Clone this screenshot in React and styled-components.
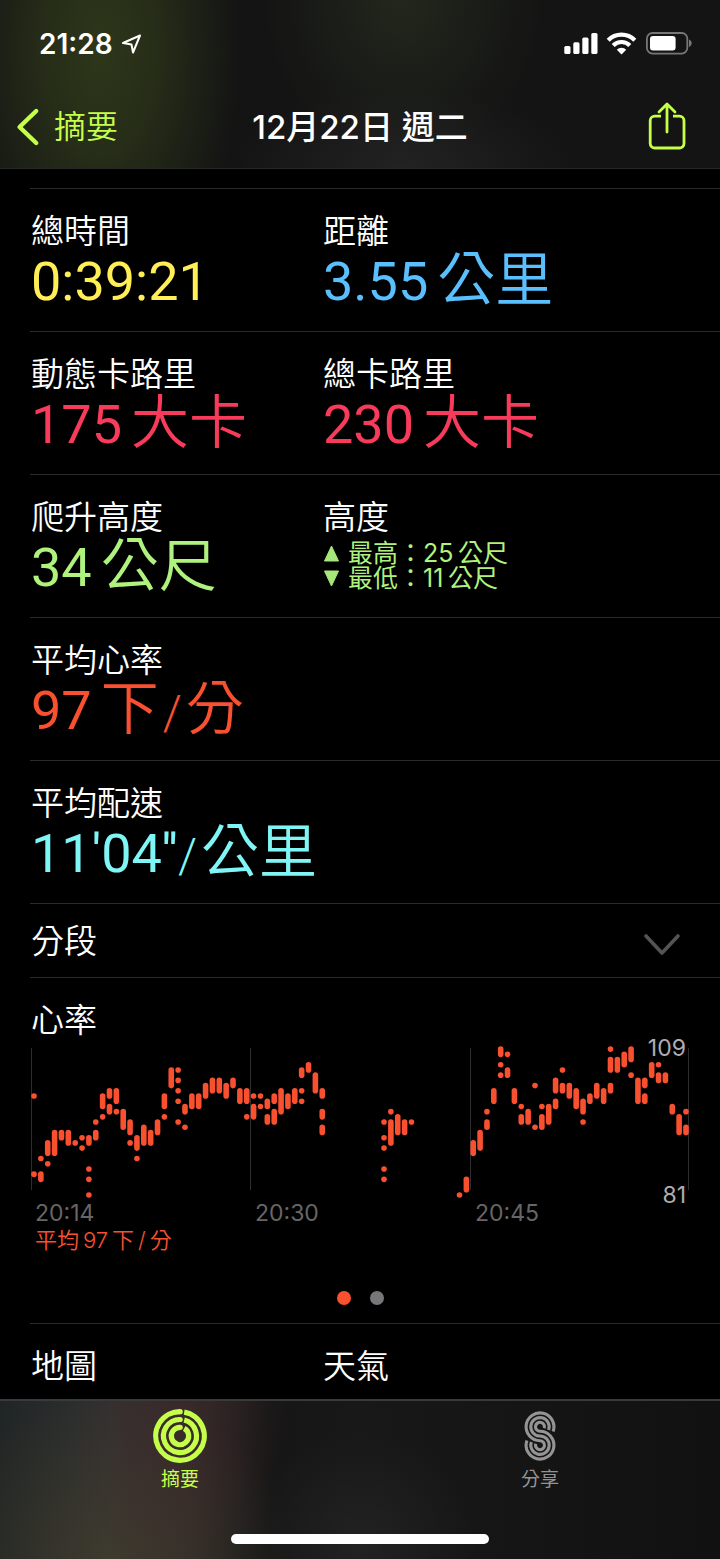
import React from 'react';
import styled, { createGlobalStyle } from 'styled-components';

const GlobalStyle = createGlobalStyle`
  * {
    box-sizing: border-box;
  }

  body {
    margin: 0;
    background: #000;
    color: #fff;
    font-family: Inter, "Noto Sans CJK TC", sans-serif;
  }

  button {
    margin: 0;
    padding: 0;
    border: 0;
    background: none;
    color: inherit;
    font: inherit;
    cursor: pointer;
  }
`;

const colors = {
  lime: '#c6ff4a',
  yellow: '#ffee55',
  blue: '#59bffd',
  pink: '#f93b5b',
  green: '#b0f27e',
  red: '#f95030',
  cyan: '#7ff6f5',
  line: '#2a2a2b',
};

const Page = styled.div`
  display: flex;
  flex-direction: column;
  min-height: 100vh;
`;

const Header = styled.header`
  border-bottom: 1px solid #262626;
  background:
    radial-gradient(ellipse 140px 260px at 100px 50px, rgba(56, 70, 28, 0.7), rgba(56, 70, 28, 0.5) 40%, rgba(56, 70, 28, 0) 100%),
    radial-gradient(ellipse 140px 160px at 56% 0, rgba(44, 52, 34, 0.6), rgba(44, 52, 34, 0) 100%),
    radial-gradient(ellipse 170px 80px at 56% 100%, rgba(44, 44, 46, 0.6), rgba(44, 44, 46, 0) 100%),
    #141414;
`;

const StatusBar = styled.div`
  display: flex;
  align-items: center;
  justify-content: space-between;
  height: 86px;
  padding: 2px 28px 0 39px;
`;

const Clock = styled.div`
  display: flex;
  align-items: center;
  gap: 8px;
  font-size: 28px;
  font-weight: 600;
`;

const NavBar = styled.nav`
  display: grid;
  grid-template-columns: 1fr auto 1fr;
  align-items: center;
  height: 82px;
  padding: 0 16px;
`;

const BackButton = styled.button`
  display: flex;
  align-items: center;
  gap: 14px;
  justify-self: start;
  color: ${colors.lime};
  font-size: 32px;
  font-weight: 350;
  line-height: 40px;
`;

const Title = styled.h1`
  margin: 0;
  font-size: 33px;
  font-weight: 500;
  line-height: 40px;
`;

const ShareButton = styled.button`
  justify-self: end;
  height: 52px;
  margin-right: 18px;
  color: ${colors.lime};
`;

const Content = styled.main`
  flex: 1;
  padding: 19px 0 0 30px;
`;

const Row = styled.dl`
  display: grid;
  grid-template-columns: 292px 1fr;
  margin: 0;
  padding: 22px 0 20px 1px;
  border-top: 1px solid ${colors.line};
`;

const Metric = styled.div`
  white-space: nowrap;
`;

const Label = styled.dt`
  font-size: 33px;
  font-weight: 350;
  line-height: 40px;
`;

const Value = styled.dd`
  display: flex;
  align-items: baseline;
  height: 60px;
  margin: 0;
  color: ${props => props.color};
  font-family: Roboto, sans-serif;
  font-size: 54px;
  line-height: 62px;
`;

const Unit = styled.span`
  margin-left: 9px;
  font-family: "Noto Sans CJK TC", sans-serif;
  font-size: 58px;
  font-weight: 350;
  line-height: 44px;
`;

const Slash = styled.span`
  font-size: 48px;
  font-weight: 300;

  ${Unit} + & {
    margin-left: 4px;
  }

  & + ${Unit} {
    margin-left: 4px;
  }
`;

const Altitude = styled.dd`
  margin: 0;
  padding-top: 4px;
  color: ${colors.green};
  font-size: 25px;
  line-height: 25px;
`;

const AltitudeLine = styled.div`
  display: flex;
  align-items: center;
  gap: 8px;
  height: 25px;
`;

const SegmentButton = styled.button`
  display: flex;
  align-items: center;
  justify-content: space-between;
  width: 100%;
  height: 74px;
  padding: 0 39px 0 1px;
  border-top: 1px solid ${colors.line};
  font-size: 33px;
  font-weight: 350;
  line-height: 40px;
`;

const ChartSection = styled.section`
  padding: 22px 30px 17px 0;
  border-top: 1px solid ${colors.line};
`;

const SectionTitle = styled.h2`
  margin: 0 0 0 1px;
  font-size: 33px;
  font-weight: 350;
  line-height: 40px;
`;

const Chart = styled.svg`
  display: block;
  width: 100%;
  height: auto;
  overflow: visible;
`;

const Times = styled.div`
  display: grid;
  grid-template-columns: repeat(3, 1fr);
  color: #666668;
  font-size: 23px;
  line-height: 26px;
`;

const Time = styled.span`
  padding-left: 5px;
`;

const Average = styled.div`
  padding-left: 5px;
  color: ${colors.red};
  font-size: 22px;
  font-weight: 350;
  line-height: 28px;
`;

const Dots = styled.div`
  display: flex;
  justify-content: center;
  gap: 19px;
  margin-top: 37px;
  padding-bottom: 1px;
`;

const Dot = styled.button`
  width: 14px;
  height: 14px;
  border-radius: 50%;
  background: ${props => (props.$active ? colors.red : '#777779')};
`;

const LastRow = styled(Row)`
  padding-bottom: 12px;
`;

const TabBar = styled.footer`
  border-top: 2px solid #3a3a3a;
  background:
    radial-gradient(ellipse 110px 190px at 180px 0, rgba(72, 40, 42, 0.5), rgba(72, 40, 42, 0.3) 45%, rgba(72, 40, 42, 0) 100%),
    radial-gradient(ellipse 180px 170px at 110px 100%, rgba(72, 64, 44, 0.6), rgba(72, 64, 44, 0) 100%),
    radial-gradient(ellipse 120px 110px at 50% 90%, rgba(44, 44, 46, 0.5), rgba(44, 44, 46, 0) 100%),
    linear-gradient(90deg, #202525 0, #2f3131 110px, #2b2a29 190px, #161616 270px, #181818 50%, #111 100%);
`;

const Tabs = styled.nav`
  display: grid;
  grid-template-columns: 1fr 1fr;
`;

const Tab = styled.button`
  display: flex;
  flex-direction: column;
  align-items: center;
  gap: 2px;
  padding-top: 7px;
  color: ${props => (props.$active ? colors.lime : '#949494')};
  font-size: 19px;
  line-height: 28px;
`;

const HomeIndicator = styled.div`
  width: 258px;
  height: 10px;
  margin: 40px auto 15px;
  border-radius: 5px;
  background: #fff;
`;

// one entry per column: [column, [high, low], ...], a single reading has high === low
const heartRate = [
  [0, [100, 100], [85, 85]],
  [1, [88, 88], [85, 84]],
  [2, [91, 89], [87, 87]],
  [3, [93, 89]],
  [4, [93, 92]],
  [5, [93, 91]],
  [6, [91, 91]],
  [7, [92, 92], [90, 90]],
  [8, [92, 91], [86, 86], [84, 84], [81, 81]],
  [9, [95, 95], [93, 92]],
  [10, [100, 98], [96, 96]],
  [11, [101, 100], [98, 97]],
  [12, [101, 99], [97, 97]],
  [13, [97, 94]],
  [14, [95, 93], [91, 91]],
  [15, [92, 90], [88, 88]],
  [16, [94, 91]],
  [17, [93, 91]],
  [18, [95, 93]],
  [19, [100, 98], [96, 96]],
  [20, [105, 102]],
  [21, [105, 105], [103, 103], [101, 101], [99, 99], [95, 95]],
  [22, [98, 97], [94, 94]],
  [23, [100, 98]],
  [24, [100, 98]],
  [25, [102, 100]],
  [26, [103, 101]],
  [27, [103, 101]],
  [28, [102, 100]],
  [29, [103, 102]],
  [30, [101, 99]],
  [31, [101, 99], [96, 96]],
  [32, [100, 100], [98, 96]],
  [33, [100, 100], [98, 98]],
  [34, [99, 98], [96, 95]],
  [35, [100, 99], [97, 95]],
  [36, [101, 97]],
  [37, [100, 98]],
  [38, [101, 99]],
  [39, [105, 104], [101, 101], [99, 99]],
  [40, [106, 105]],
  [41, [104, 101]],
  [42, [101, 100], [97, 96], [94, 93]],
  [51, [95, 95], [92, 92], [90, 90], [86, 86], [84, 84]],
  [52, [97, 97], [95, 91]],
  [53, [96, 93]],
  [54, [95, 93]],
  [55, [95, 95]],
  [62, [81, 81]],
  [63, [84, 82]],
  [64, [91, 89]],
  [65, [93, 90]],
  [66, [97, 97], [95, 94]],
  [67, [101, 99]],
  [68, [109, 108], [106, 106], [104, 104]],
  [69, [108, 108], [105, 104]],
  [70, [101, 99]],
  [71, [98, 98], [96, 95]],
  [72, [97, 95]],
  [73, [102, 102], [94, 94]],
  [74, [98, 98], [96, 94]],
  [75, [98, 95]],
  [76, [103, 101], [99, 98]],
  [77, [105, 105], [102, 101]],
  [78, [102, 100]],
  [79, [101, 98]],
  [80, [99, 97], [95, 95]],
  [81, [100, 99]],
  [82, [102, 100]],
  [83, [101, 99]],
  [84, [109, 109], [107, 105], [102, 101]],
  [85, [107, 105]],
  [86, [108, 106]],
  [87, [109, 107], [104, 104]],
  [88, [103, 99]],
  [89, [103, 102], [100, 99]],
  [90, [106, 104]],
  [91, [106, 106], [104, 103]],
  [92, [104, 103]],
  [93, [98, 97]],
  [94, [96, 93]],
  [95, [97, 97], [94, 93]],
];

const chartX = column => 4 + column * 6.863;
const chartY = bpm => 155 - (bpm - 81) * 5.21;

const HeartRateChart = () => (
  <Chart viewBox="0 0 660 160" role="img" aria-label="心率">
    {[1.5, 220.5, 440.5, 658.5].map(x => (
      <line key={x} x1={x} x2={x} y1="8" y2="150" stroke="#2e2e30" />
    ))}
    {heartRate.map(([column, ...ranges]) =>
      ranges.map(([high, low]) => (
        <rect
          key={column + '-' + high}
          x={chartX(column) - 2.8}
          y={chartY(high) - 2.8}
          width="5.6"
          height={chartY(low) - chartY(high) + 5.6}
          rx="2.8"
          fill={colors.red}
        />
      ))
    )}
    <g fill="#aeaeb2" fontSize="23" textAnchor="end">
      <text x="656" y="16">109</text>
      <text x="656" y="163">81</text>
    </g>
  </Chart>
);

const LocationIcon = () => (
  <svg width="21" height="20" viewBox="0 0 21 20" fill="none" stroke="#fff" strokeWidth="2" strokeLinejoin="round">
    <path d="M19 1.5 2 9l8.5 1.5L12 18.5z" />
  </svg>
);

const StatusIcons = () => (
  <svg width="128" height="24" viewBox="0 0 128 24" fill="#fff">
    <rect x="0.3" y="14" width="6.2" height="8" rx="1.6" />
    <rect x="9.3" y="10.3" width="6.2" height="11.7" rx="1.6" />
    <rect x="18.3" y="5.6" width="6.2" height="16.4" rx="1.6" />
    <rect x="27.3" y="1" width="6.2" height="21" rx="1.6" />
    <g fill="none" stroke="#fff" strokeWidth="4.2">
      <path d="M44.2 8.2a18.5 18.5 0 0 1 26.6 0" />
      <path d="M49.2 13.4a11.8 11.8 0 0 1 16.6 0" />
    </g>
    <path d="M57.5 22.5l-4.7-4.8a6.8 6.8 0 0 1 9.4 0z" />
    <rect x="82.9" y="1" width="40.4" height="20.6" rx="5.6" fill="none" stroke="#777" strokeWidth="1.8" />
    <rect x="86" y="4" width="25.6" height="14.6" rx="3" />
    <path d="M125 7.6c3.6 1.6 3.6 5.8 0 7.4z" fill="#777" />
  </svg>
);

const BackIcon = () => (
  <svg width="24" height="40" viewBox="0 0 24 40" fill="none" stroke="currentColor" strokeWidth="4.4" strokeLinecap="round" strokeLinejoin="round">
    <path d="M20.2 4 3.6 20 20.2 36" />
  </svg>
);

const ShareIcon = () => (
  <svg width="38" height="52" viewBox="0 0 38 52" fill="none" stroke="currentColor" strokeWidth="2.8">
    <path d="M13 15.2H6.8a4.6 4.6 0 0 0-4.6 4.6v22.6A4.6 4.6 0 0 0 6.8 47h24.6a4.6 4.6 0 0 0 4.6-4.6V19.8a4.6 4.6 0 0 0-4.6-4.6H25" />
    <path d="M19 31V3.2M11 11l8-8 8 8" strokeLinecap="round" strokeLinejoin="round" />
  </svg>
);

const ChevronIcon = () => (
  <svg width="38" height="30" viewBox="0 0 38 30" fill="none" stroke="#545456" strokeWidth="3.6" strokeLinecap="round" strokeLinejoin="round">
    <path d="M3 10l16 17L35 10" />
  </svg>
);

const TriangleIcon = ({ down }) => (
  <svg width="17" height="17" viewBox="0 0 17 17" fill="#a6e87a">
    <path d={down ? 'M1.5 1h14L8.5 16z' : 'M1.5 16h14L8.5 1z'} stroke="#a6e87a" strokeLinejoin="round" />
  </svg>
);

const RingsIcon = () => (
  <svg width="56" height="56" viewBox="-28 -28 56 56">
    {[24.3, 16.5, 8.7].map(r => (
      <g key={r}>
        <path
          d={`M4.2 ${-Math.sqrt(r * r - 17.64)}A${r} ${r} 0 1 1 0 ${-r}`}
          fill="none"
          stroke="currentColor"
          strokeWidth="5.2"
        />
        <circle cx="0.2" cy={-r} r="2.6" fill="currentColor" />
      </g>
    ))}
  </svg>
);

const SharingIcon = () => {
  const cos = Math.cos(Math.PI / 9);
  const sin = Math.sin(Math.PI / 9);
  const top = -9.2;
  const bottom = 9.2;

  return (
    <svg width="56" height="56" viewBox="-28 -28 56 56" fill="none" stroke="currentColor" strokeWidth="3.1">
      {[13.9, 9.2, 4.5].map(r => {
        const s = 18.4 - r;
        return (
          <path
            key={r}
            d={`M${r * cos} ${top + r * sin}A${r} ${r} 0 1 0 0 ${top + r}A${s} ${s} 0 1 1 ${-s * cos} ${bottom - s * sin}`}
          />
        );
      })}
    </svg>
  );
};

const App = () => (
  <Page lang="zh-Hant">
    <GlobalStyle />
    <Header>
      <StatusBar>
        <Clock>
          21:28
          <LocationIcon />
        </Clock>
        <StatusIcons />
      </StatusBar>
      <NavBar>
        <BackButton>
          <BackIcon />
          摘要
        </BackButton>
        <Title>12月22日 週二</Title>
        <ShareButton aria-label="分享體能訓練">
          <ShareIcon />
        </ShareButton>
      </NavBar>
    </Header>

    <Content>
      <Row>
        <Metric>
          <Label>總時間</Label>
          <Value color={colors.yellow}>0:39:21</Value>
        </Metric>
        <Metric>
          <Label>距離</Label>
          <Value color={colors.blue}>3.55<Unit>公里</Unit></Value>
        </Metric>
      </Row>
      <Row>
        <Metric>
          <Label>動態卡路里</Label>
          <Value color={colors.pink}>175<Unit>大卡</Unit></Value>
        </Metric>
        <Metric>
          <Label>總卡路里</Label>
          <Value color={colors.pink}>230<Unit>大卡</Unit></Value>
        </Metric>
      </Row>
      <Row>
        <Metric>
          <Label>爬升高度</Label>
          <Value color={colors.green}>34<Unit>公尺</Unit></Value>
        </Metric>
        <Metric>
          <Label>高度</Label>
          <Altitude>
            <AltitudeLine><TriangleIcon />最高：25&thinsp;公尺</AltitudeLine>
            <AltitudeLine><TriangleIcon down />最低：11&thinsp;公尺</AltitudeLine>
          </Altitude>
        </Metric>
      </Row>
      <Row>
        <Metric>
          <Label>平均心率</Label>
          <Value color={colors.red}>97<Unit>下</Unit><Slash>/</Slash><Unit>分</Unit></Value>
        </Metric>
      </Row>
      <Row>
        <Metric>
          <Label>平均配速</Label>
          <Value color={colors.cyan}>11'04''<Slash>/</Slash><Unit>公里</Unit></Value>
        </Metric>
      </Row>

      <SegmentButton>
        分段
        <ChevronIcon />
      </SegmentButton>

      <ChartSection>
        <SectionTitle>心率</SectionTitle>
        <HeartRateChart />
        <Times>
          <Time>20:14</Time>
          <Time>20:30</Time>
          <Time>20:45</Time>
        </Times>
        <Average>平均&thinsp;97&thinsp;下&thinsp;/&thinsp;分</Average>
        <Dots>
          <Dot $active aria-label="第 1 頁" />
          <Dot aria-label="第 2 頁" />
        </Dots>
      </ChartSection>

      <LastRow>
        <Label>地圖</Label>
        <Label>天氣</Label>
      </LastRow>
    </Content>

    <TabBar>
      <Tabs>
        <Tab $active>
          <RingsIcon />
          摘要
        </Tab>
        <Tab>
          <SharingIcon />
          分享
        </Tab>
      </Tabs>
      <HomeIndicator />
    </TabBar>
  </Page>
);

export default App;
